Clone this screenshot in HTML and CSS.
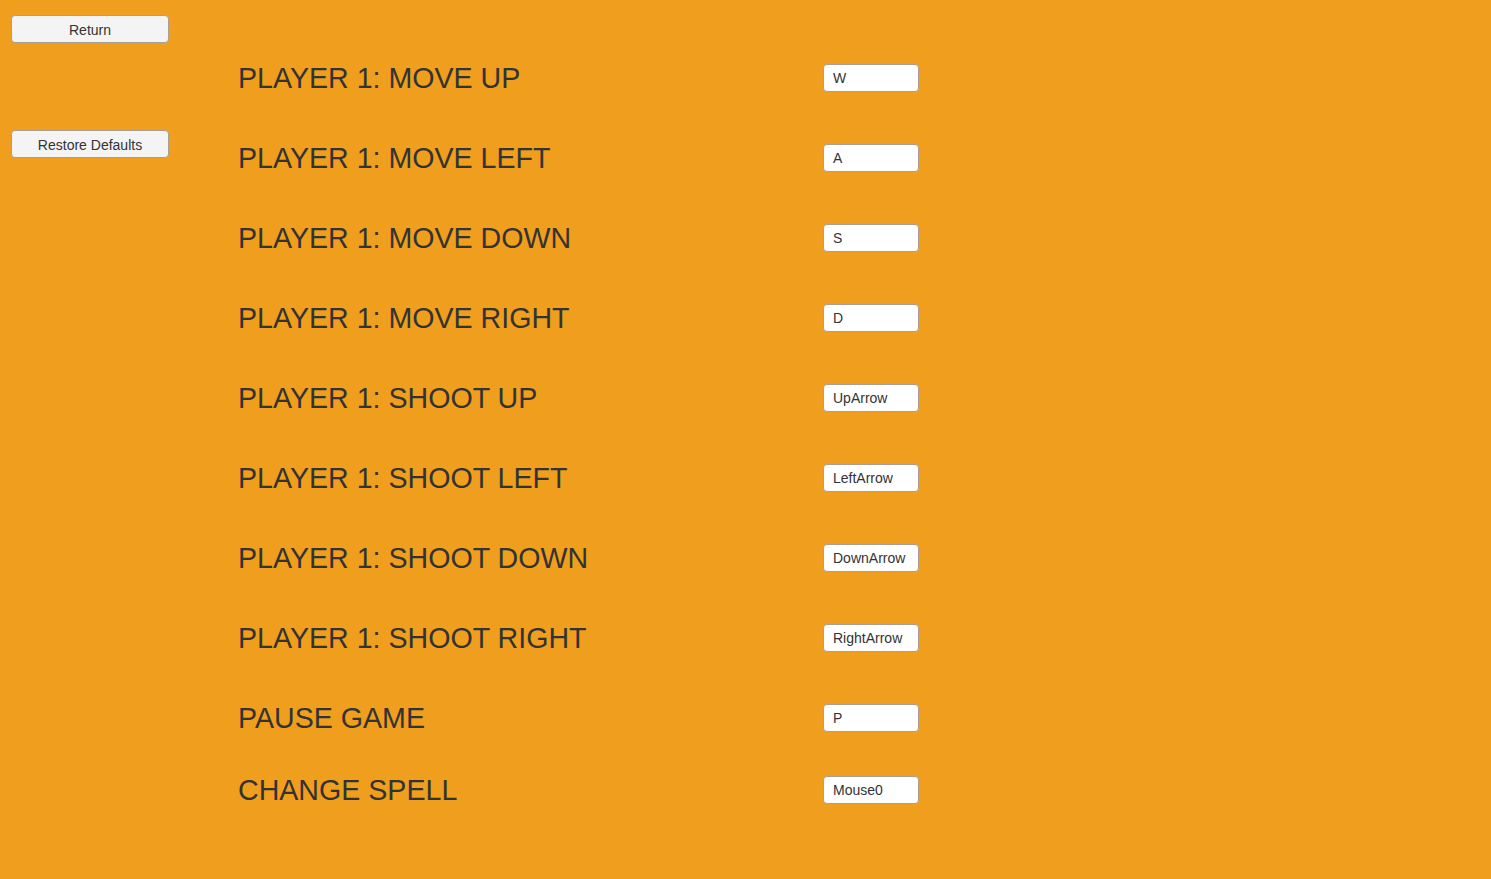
FILE: index.html
```html
<!DOCTYPE html>
<html>
<head>
<meta charset="utf-8">
<link rel="stylesheet" href="styles.css">
</head>
<body>
<div class="page">
  <aside class="side">
    <button class="btn">Return</button>
    <button class="btn btn-restore">Restore Defaults</button>
  </aside>
  <main class="bindings">
    <div class="row"><span class="label">PLAYER 1: MOVE UP</span><span class="key">W</span></div>
    <div class="row"><span class="label">PLAYER 1: MOVE LEFT</span><span class="key">A</span></div>
    <div class="row"><span class="label">PLAYER 1: MOVE DOWN</span><span class="key">S</span></div>
    <div class="row"><span class="label">PLAYER 1: MOVE RIGHT</span><span class="key">D</span></div>
    <div class="row"><span class="label">PLAYER 1: SHOOT UP</span><span class="key">UpArrow</span></div>
    <div class="row"><span class="label">PLAYER 1: SHOOT LEFT</span><span class="key">LeftArrow</span></div>
    <div class="row"><span class="label">PLAYER 1: SHOOT DOWN</span><span class="key">DownArrow</span></div>
    <div class="row"><span class="label">PLAYER 1: SHOOT RIGHT</span><span class="key">RightArrow</span></div>
    <div class="row"><span class="label">PAUSE GAME</span><span class="key">P</span></div>
    <div class="row row-last"><span class="label">CHANGE SPELL</span><span class="key">Mouse0</span></div>
  </main>
</div>
</body>
</html>
```
FILE: styles.css
```css
html, body {
  margin: 0;
  padding: 0;
  height: 100%;
  background: #f09e1e;
  font-family: "Liberation Sans", Arial, sans-serif;
  color: #333333;
}
.page {
  display: flex;
  height: 100%;
}
.side {
  width: 227px;
  padding: 15px 0 0 11px;
  display: flex;
  flex-direction: column;
  gap: 87px;
}
.btn {
  width: 158px;
  height: 28px;
  background: #f4f4f4;
  border: 1px solid #a89f92;
  border-radius: 4px;
  font-family: "Liberation Sans", Arial, sans-serif;
  font-size: 14px;
  color: #333;
  padding: 1px 0 0;
}
.bindings {
  padding-top: 38px;
  display: flex;
  flex-direction: column;
}
.row {
  height: 80px;
  display: flex;
  align-items: center;
}
.row-last {
  height: 64px;
}
.label {
  width: 585px;
  font-size: 28.6px;
  line-height: 34px;
}
.key {
  box-sizing: border-box;
  width: 96px;
  height: 28px;
  background: #ffffff;
  border: 1px solid #a89f92;
  border-radius: 4px;
  font-size: 14px;
  line-height: 26px;
  padding-left: 9px;
}
```
